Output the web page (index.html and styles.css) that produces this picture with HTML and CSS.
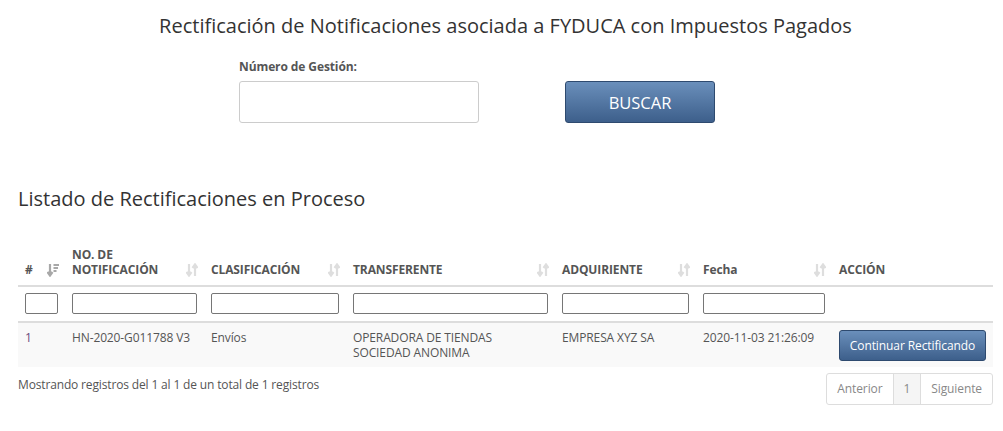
FILE: index.html
```html
<!DOCTYPE html>
<html lang="es">
<head>
    <meta charset="UTF-8">
    <title>Rectificación de Notificaciones</title>
    <link rel="stylesheet" href="styles.css">
</head>
<body>
    <div class="page">
        <h1 class="title">Rectificación de Notificaciones asociada a FYDUCA con Impuestos Pagados</h1>

        <div class="search">
            <div class="field">
                <label class="label" for="gestion">Número de Gestión:</label>
                <input class="input" id="gestion" type="text">
            </div>
            <button class="btn btn-big" type="button">BUSCAR</button>
        </div>

        <h2 class="subtitle">Listado de Rectificaciones en Proceso</h2>

        <table class="grid">
            <colgroup>
                <col style="width:47px">
                <col style="width:139px">
                <col style="width:142px">
                <col style="width:209px">
                <col style="width:141px">
                <col style="width:136px">
                <col style="width:161px">
            </colgroup>
            <thead>
                <tr class="heads">
                    <th><div class="th"><span>#</span>
                        <svg class="sort on" width="12" height="14" viewBox="0 0 12 14"><path d="M3 1v11M0.5 9l2.5 3.5 2.5-3.5" fill="none" stroke="currentColor" stroke-width="2.2"/><path d="M6.5 2h5.5M6.5 5h4.5M6.5 8h3" stroke="currentColor" stroke-width="2"/></svg>
                    </div></th>
                    <th><div class="th"><span>NO. DE<br>NOTIFICACIÓN</span>
                        <svg class="sort" width="12" height="14" viewBox="0 0 12 14"><path d="M3 1v11M0.5 9l2.5 3.5 2.5-3.5M9 13V2M6.5 5l2.5-3.5 2.5 3.5" fill="none" stroke="currentColor" stroke-width="2.2"/></svg>
                    </div></th>
                    <th><div class="th"><span>CLASIFICACIÓN</span>
                        <svg class="sort" width="12" height="14" viewBox="0 0 12 14"><path d="M3 1v11M0.5 9l2.5 3.5 2.5-3.5M9 13V2M6.5 5l2.5-3.5 2.5 3.5" fill="none" stroke="currentColor" stroke-width="2.2"/></svg>
                    </div></th>
                    <th><div class="th"><span>TRANSFERENTE</span>
                        <svg class="sort" width="12" height="14" viewBox="0 0 12 14"><path d="M3 1v11M0.5 9l2.5 3.5 2.5-3.5M9 13V2M6.5 5l2.5-3.5 2.5 3.5" fill="none" stroke="currentColor" stroke-width="2.2"/></svg>
                    </div></th>
                    <th><div class="th"><span>ADQUIRIENTE</span>
                        <svg class="sort" width="12" height="14" viewBox="0 0 12 14"><path d="M3 1v11M0.5 9l2.5 3.5 2.5-3.5M9 13V2M6.5 5l2.5-3.5 2.5 3.5" fill="none" stroke="currentColor" stroke-width="2.2"/></svg>
                    </div></th>
                    <th><div class="th"><span>Fecha</span>
                        <svg class="sort" width="12" height="14" viewBox="0 0 12 14"><path d="M3 1v11M0.5 9l2.5 3.5 2.5-3.5M9 13V2M6.5 5l2.5-3.5 2.5 3.5" fill="none" stroke="currentColor" stroke-width="2.2"/></svg>
                    </div></th>
                    <th><div class="th"><span>ACCIÓN</span></div></th>
                </tr>
                <tr class="filters">
                    <th><input class="filter" type="text"></th>
                    <th><input class="filter" type="text"></th>
                    <th><input class="filter" type="text"></th>
                    <th><input class="filter" type="text"></th>
                    <th><input class="filter" type="text"></th>
                    <th><input class="filter" type="text"></th>
                    <th></th>
                </tr>
            </thead>
            <tbody>
                <tr class="row">
                    <td class="num">1</td>
                    <td>HN-2020-G011788 V3</td>
                    <td>Envíos</td>
                    <td>OPERADORA DE TIENDAS<br>SOCIEDAD ANONIMA</td>
                    <td>EMPRESA XYZ SA</td>
                    <td>2020-11-03 21:26:09</td>
                    <td><button class="btn btn-small" type="button">Continuar Rectificando</button></td>
                </tr>
            </tbody>
        </table>

        <div class="foot">
            <div class="info">Mostrando registros del 1 al 1 de un total de 1 registros</div>
            <div class="pager">
                <span class="pg">Anterior</span>
                <span class="pg current">1</span>
                <span class="pg">Siguiente</span>
            </div>
        </div>
    </div>
</body>
</html>
```

FILE: styles.css
```css
body {
    margin: 0;
    font-family: "Open Sans", "DejaVu Sans", sans-serif;
    color: #555;
    background: #fff;
}
.page {
    padding: 0 10px 0 18px;
}
.title {
    margin: 0;
    padding-top: 12px;
    font-size: 20px;
    font-weight: normal;
    line-height: 28px;
    color: #333;
    text-align: center;
}
.search {
    display: flex;
    align-items: flex-end;
    gap: 86px;
    margin: 19px 0 0 221px;
}
.field {
    display: flex;
    flex-direction: column;
}
.label {
    font-size: 12px;
    font-weight: bold;
    line-height: 16px;
    color: #555;
    margin-bottom: 6px;
    letter-spacing: -0.1px;
}
.input {
    box-sizing: border-box;
    width: 240px;
    height: 42px;
    border: 1px solid #ccc;
    border-radius: 3px;
    margin: 0;
}
.btn {
    color: #fff;
    font-family: "Open Sans", "DejaVu Sans", sans-serif;
    background: linear-gradient(#6a8fbb, #3d5f8b);
    border: 1px solid #2e4a6f;
    border-radius: 3px;
    cursor: pointer;
}
.btn-big {
    box-sizing: border-box;
    width: 150px;
    height: 42px;
    font-size: 16.5px;
}
.btn-small {
    box-sizing: border-box;
    width: 147px;
    height: 31px;
    font-size: 12px;
    letter-spacing: -0.1px;
    padding: 0;
}
.subtitle {
    margin: 62px 0 0;
    font-size: 20px;
    font-weight: normal;
    line-height: 28px;
    color: #333;
}
.grid {
    table-layout: fixed;
    border-collapse: collapse;
    width: 975px;
    margin-top: 34px;
    font-size: 12px;
    letter-spacing: -0.12px;
}
.heads th {
    text-align: left;
    vertical-align: bottom;
    padding: 0 6px 8px 7px;
    border-bottom: 2px solid #ddd;
    color: #555;
    font-weight: bold;
    line-height: 15px;
}
.th {
    display: flex;
    justify-content: space-between;
    align-items: flex-end;
}
.sort {
    color: #dedede;
    flex-shrink: 0;
}
.sort.on {
    color: #a8a8a8;
}
.filters th {
    padding: 6px 7px 7px;
    border-bottom: 2px solid #ddd;
}
.filter {
    box-sizing: border-box;
    display: block;
    width: 100%;
    height: 21px;
    margin: 0;
    border: 1px solid #767676;
    border-radius: 2px;
}
.row td {
    background: #f9f9f9;
    vertical-align: top;
    padding: 7px 7px 6px;
    line-height: 15px;
    color: #555;
}
.row td.num {
    color: #6b4a7c;
}
.foot {
    display: flex;
    justify-content: space-between;
    align-items: flex-start;
    width: 975px;
    margin-top: 6px;
}
.info {
    font-size: 12px;
    line-height: 16px;
    letter-spacing: -0.15px;
    padding-top: 4px;
}
.pager {
    display: flex;
    border: 1px solid #ddd;
    border-radius: 3px;
    font-size: 12px;
    letter-spacing: -0.1px;
    color: #888;
}
.pg {
    padding: 7px 10px;
    line-height: 16px;
}
.pg + .pg {
    border-left: 1px solid #ddd;
}
.pg.current {
    background: #f5f5f5;
}
```
